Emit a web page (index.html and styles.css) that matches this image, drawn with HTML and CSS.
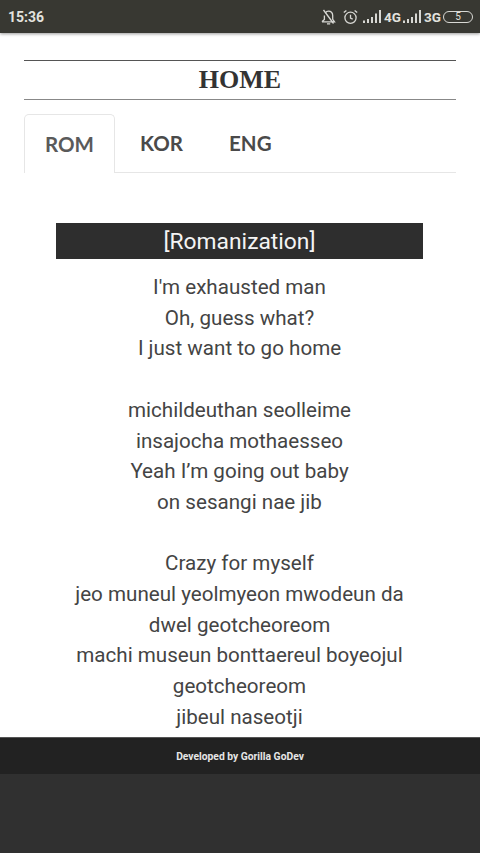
FILE: index.html
```html
<!DOCTYPE html>
<html lang="en">
<head>
    <meta charset="UTF-8">
    <meta name="viewport" content="width=device-width, initial-scale=1.0">
    <title>HOME</title>
    <link rel="stylesheet" href="styles.css">
</head>
<body>
    <div class="status-bar">
        <span class="clock">15:36</span>
        <div class="status-icons">
            <svg class="icon" width="15" height="16" viewBox="0 0 15 16" fill="none" stroke="#d8d8d4" stroke-width="1.3">
                <path d="M1 12.8h12.5l-1.8-2.4V6.5C11.7 3.8 9.8 2.2 7.6 2.2 6.2 2.2 5 2.9 4.4 4M3.4 6.5v3.9L1 12.8"/>
                <path d="M6 14.8h3.2M2.5 1l10 13.5"/>
            </svg>
            <svg class="icon alarm" width="15" height="16" viewBox="0 0 15 16" fill="none" stroke="#d8d8d4" stroke-width="1.3">
                <circle cx="7.5" cy="8.8" r="5.6"/>
                <path d="M7.5 5.8v3.4l2.2 1M.8 3.6l2.6-2.2M14.2 3.6l-2.6-2.2"/>
            </svg>
            <svg class="signal" width="18" height="13" viewBox="0 0 18 13" fill="#d8d8d4">
                <path d="M0 10.5h2V13H0zM4 9h2v4H4zM8 7h2v6H8zM12 3.5h2V13h-2zM16 0h2v13h-2z"/>
            </svg>
            <span class="net">4G</span>
            <svg class="signal" width="18" height="13" viewBox="0 0 18 13" fill="#d8d8d4">
                <path d="M0 10.5h2V13H0zM4 9h2v4H4zM8 7h2v6H8zM12 3.5h2V13h-2zM16 0h2v13h-2z"/>
            </svg>
            <span class="net">3G</span>
            <span class="battery">5</span>
        </div>
    </div>

    <div class="page">
        <h1 class="title">HOME</h1>

        <div class="tabs">
            <div class="tab active">ROM</div>
            <div class="tab">KOR</div>
            <div class="tab">ENG</div>
        </div>

        <div class="lyrics">
            <div class="lyrics-head">[Romanization]</div>
            <p>I'm exhausted man<br>Oh, guess what?<br>I just want to go home</p>
            <p>michildeuthan seolleime<br>insajocha mothaesseo<br>Yeah I’m going out baby<br>on sesangi nae jib</p>
            <p>Crazy for myself<br>jeo muneul yeolmyeon mwodeun da<br>dwel geotcheoreom<br>machi museun bonttaereul boyeojul<br>geotcheoreom<br>jibeul naseotji</p>
        </div>
    </div>

    <div class="footer">Developed by Gorilla GoDev</div>
    <div class="nav-space"></div>
</body>
</html>
```

FILE: styles.css
```css
body {
  margin: 0;
  display: flex;
  flex-direction: column;
  height: 853px;
  overflow: hidden;
  background-color: #303030;
  font-family: Roboto, sans-serif;
}

.status-bar {
  display: flex;
  flex-shrink: 0;
  justify-content: space-between;
  align-items: center;
  height: 33px;
  padding: 0 7px 0 8px;
  box-sizing: border-box;
  background-color: #383832;
  box-shadow: 0 1px 3px rgba(0, 0, 0, 0.4);
  color: #e2e2de;
  position: relative;
}
.clock {
  font-size: 14px;
  font-weight: 700;
}
.status-icons {
  display: flex;
  align-items: center;
}
.icon {
  margin-right: 7px;
}
.alarm {
  margin-right: 5px;
}
.signal {
  margin-right: 3px;
}
.net {
  width: 17px;
  margin-right: 2px;
  font-size: 13.5px;
  font-weight: 700;
  text-align: center;
}
.battery {
  width: 28px;
  height: 10px;
  border: 1px solid #d8d8d4;
  border-radius: 6px;
  font-size: 10px;
  line-height: 10px;
  text-align: center;
}

.page {
  flex-shrink: 0;
  height: 704px;
  padding: 27px 24px 0;
  box-sizing: border-box;
  overflow: hidden;
  background-color: #fff;
}
.title {
  margin: 0;
  height: 40px;
  box-sizing: border-box;
  border-top: 1px solid #555;
  border-bottom: 1px solid #888;
  color: #333;
  font-family: "Liberation Serif", serif;
  font-size: 26px;
  font-weight: 700;
  line-height: 38px;
  text-align: center;
}

.tabs {
  display: flex;
  height: 58px;
  margin-top: 14px;
  border-bottom: 1px solid #e6e6e6;
}
.tab {
  padding: 0 23px;
  color: #4a4a4a;
  font-family: Lato, sans-serif;
  font-size: 20.5px;
  font-weight: 700;
  line-height: 58px;
}
.tab.active {
  width: 91px;
  height: 59px;
  margin-right: 2px;
  padding: 0;
  box-sizing: border-box;
  border: 1px solid #e6e6e6;
  border-bottom: none;
  border-radius: 5px 5px 0 0;
  background-color: #fff;
  color: #5a5a5a;
  text-align: center;
}

.lyrics {
  margin: 50px 33px 0 32px;
  color: #444;
  font-size: 20.6px;
  line-height: 30.7px;
  text-align: center;
}
.lyrics-head {
  height: 36px;
  margin-bottom: 13px;
  background-color: #2e2e2e;
  color: #f4f4f4;
  font-size: 22.8px;
  line-height: 37px;
}
.lyrics p {
  margin: 0 0 30.7px;
}

.footer {
  flex-shrink: 0;
  height: 37px;
  border-top: 1px solid #555;
  box-sizing: border-box;
  background-color: #222;
  color: #e6e6e6;
  font-size: 10.3px;
  font-weight: 700;
  line-height: 38px;
  text-align: center;
}
.nav-space {
  flex: 1;
  background-color: #303030;
}
```
